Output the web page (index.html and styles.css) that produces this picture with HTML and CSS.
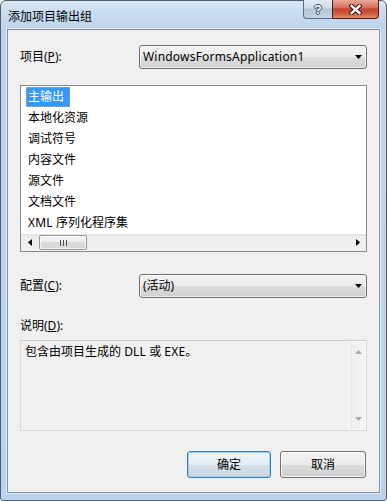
FILE: index.html
```html
<!DOCTYPE html>
<html lang="zh-CN">
<head>
<meta charset="utf-8">
<title>添加项目输出组</title>
<link rel="stylesheet" href="styles.css">
</head>
<body>
<div class="window">
  <div class="titlebar">
    <span class="title">添加项目输出组</span>
    <div class="caption">
      <div class="cap-btn help"><span class="help-glyph">?</span></div>
      <div class="cap-btn close">
        <svg width="13" height="11" viewBox="0 0 13 11"><path d="M2.5 2 L10.5 9 M10.5 2 L2.5 9" stroke="#3a1712" stroke-width="4.6" stroke-linecap="square" fill="none"/><path d="M2.5 2 L10.5 9 M10.5 2 L2.5 9" stroke="#ffffff" stroke-width="2.4" stroke-linecap="square" fill="none"/></svg>
      </div>
    </div>
  </div>
  <div class="client">
    <div class="field">
      <span class="label">项目(<u>P</u>):</span>
      <div class="combo"><span class="latin">WindowsFormsApplication1</span><svg class="drop" width="7" height="4" viewBox="0 0 7 4"><path d="M0 0 H7 L3.5 4 Z" fill="#000"/></svg></div>
    </div>
    <div class="listbox">
      <ul class="items">
        <li class="sel"><span>主输出</span></li>
        <li>本地化资源</li>
        <li>调试符号</li>
        <li>内容文件</li>
        <li>源文件</li>
        <li>文档文件</li>
        <li><span class="latin">XML</span> 序列化程序集</li>
      </ul>
      <div class="hscroll">
        <div class="sbtn"><svg width="4" height="7" viewBox="0 0 4 7"><path d="M4 0 V7 L0 3.5 Z" fill="#000"/></svg></div>
        <div class="thumb"><svg width="7" height="6" viewBox="0 0 7 6"><path d="M0.5 0 V6 M3.5 0 V6 M6.5 0 V6" stroke="#4a4a4a" stroke-width="1"/></svg></div>
        <div class="track"></div>
        <div class="sbtn"><svg width="4" height="7" viewBox="0 0 4 7"><path d="M0 0 V7 L4 3.5 Z" fill="#000"/></svg></div>
      </div>
    </div>
    <div class="field config">
      <span class="label">配置(<u>C</u>):</span>
      <div class="combo"><span>(活动)</span><svg class="drop" width="7" height="4" viewBox="0 0 7 4"><path d="M0 0 H7 L3.5 4 Z" fill="#000"/></svg></div>
    </div>
    <div class="desc-label">说明(<u>D</u>):</div>
    <div class="desc">
      <div class="desc-text">包含由项目生成的 <span class="latin">DLL</span> 或 <span class="latin">EXE</span>。</div>
      <div class="vscroll">
        <svg width="7" height="4" viewBox="0 0 7 4"><path d="M0 4 H7 L3.5 0 Z" fill="#a8a8a8"/></svg>
        <svg width="7" height="4" viewBox="0 0 7 4"><path d="M0 0 H7 L3.5 4 Z" fill="#a8a8a8"/></svg>
      </div>
    </div>
    <div class="buttons">
      <div class="btn default">确定</div>
      <div class="btn cancel">取消</div>
    </div>
  </div>
</div>
</body>
</html>
```
FILE: styles.css
```css
* { box-sizing: border-box; }
html, body { margin: 0; padding: 0; }
body {
  width: 387px;
  height: 501px;
  overflow: hidden;
  font-family: "Noto Sans", "Noto Sans CJK SC", sans-serif;
  font-size: 12px;
  color: #000;
  background: #fff;
}
u { text-decoration: underline; text-underline-offset: 1px; }
.latin { letter-spacing: 0.2px; }

.window {
  width: 387px;
  height: 501px;
  border: 1px solid #4f5d6e;
  border-radius: 6px 6px 3px 3px;
  background: linear-gradient(#dae7f5 0, #c6daf0 14px, #bdd4ed 30px, #b9d3ef 100%);
  display: flex;
  flex-direction: column;
  padding: 0 6px 7px 6px;
}

.titlebar {
  height: 28px;
  display: flex;
  justify-content: space-between;
  align-items: flex-start;
}
.title {
  margin-top: 7px;
  margin-left: 1px;
  line-height: 16px;
  font-size: 12px;
  font-family: "Noto Sans CJK SC", sans-serif;
  color: #000;
}
.caption {
  display: flex;
  margin-top: -1px;
  margin-right: 1px;
}
.cap-btn {
  height: 19px;
  display: flex;
  align-items: center;
  justify-content: center;
}
.help {
  width: 29px;
  border: 1px solid #5d6f86;
  border-top: none;
  border-right: none;
  border-radius: 0 0 0 4px;
  background: linear-gradient(#e4ecf4 0, #cdd9e6 45%, #b3c4d6 50%, #c4d3e2 100%);
}
.help-glyph {
  font-family: "Liberation Sans", sans-serif;
  font-weight: bold;
  font-size: 13px;
  line-height: 13px;
  color: #fff;
  text-shadow: 1px 0 0 #34465c, -1px 0 0 #34465c, 0 1px 0 #34465c, 0 -1px 0 #34465c;
}
.close {
  width: 47px;
  border: 1px solid #4c1d16;
  border-top: none;
  border-radius: 0 0 4px 0;
  background: linear-gradient(#eaa99a 0, #d87562 40%, #c4452f 50%, #cf5a40 75%, #e38e6c 100%);
}
.close svg { display: block; }

.client {
  flex: 1;
  border: 1px solid #86939f;
  box-shadow: 0 0 0 1px rgba(255,255,255,0.55);
  background: #f0f0f0;
  padding: 15px 12px 0 12px;
  display: flex;
  flex-direction: column;
}

.field {
  display: grid;
  grid-template-columns: 119px 1fr;
  align-items: center;
  height: 24px;
}
.label { line-height: 16px; }
.combo {
  height: 24px;
  border: 1px solid #707070;
  border-radius: 3px;
  background: linear-gradient(#f3f3f3 0, #ebebeb 50%, #dddddd 50%, #d0d0d0 100%);
  box-shadow: inset 0 0 0 1px rgba(255,255,255,0.6);
  padding: 0 4px 0 3px;
  display: flex;
  align-items: center;
  justify-content: space-between;
  line-height: 16px;
}
.drop { display: block; }

.listbox {
  margin-top: 16px;
  height: 167px;
  border: 1px solid #828790;
  background: #fff;
  display: flex;
  flex-direction: column;
}
.items {
  list-style: none;
  margin: 0;
  padding: 0 0 0 7px;
  flex: 1;
}
.items li {
  height: 21px;
  line-height: 21px;
  white-space: nowrap;
}
.items li.sel span {
  display: inline-block;
  height: 20px;
  line-height: 18px;
  margin-left: -2px;
  padding: 0 5px 0 1px;
  background: #3399ff;
  color: #fff;
  border: 1px dotted #e8a050;
}

.hscroll {
  height: 17px;
  display: flex;
  align-items: center;
  background: linear-gradient(#e2e2e2 0, #e2e2e2 1px, #ececec 2px, #f1f1f1 100%);
}
.sbtn {
  width: 17px;
  height: 17px;
  display: flex;
  align-items: center;
  justify-content: center;
}
.thumb {
  width: 48px;
  height: 15px;
  margin-left: 1px;
  border: 1px solid #979797;
  border-radius: 2px;
  background: linear-gradient(#f4f4f4 0, #ececec 50%, #dcdcdc 50%, #d6d6d6 100%);
  box-shadow: inset 0 0 0 1px rgba(255,255,255,0.7);
  display: flex;
  align-items: center;
  justify-content: center;
}
.thumb svg { display: block; }
.track { flex: 1; }

.config { margin-top: 22px; }

.desc-label {
  margin-top: 20px;
  line-height: 16px;
}
.desc {
  margin-top: 6px;
  height: 91px;
  border: 1px solid #d5d9dd;
  border-top-color: #c9ced3;
  background: #f0f0f0;
  display: flex;
}
.desc-text {
  flex: 1;
  padding: 3px 4px;
  line-height: 16px;
}
.vscroll {
  width: 17px;
  border: 1px solid #fbfbfb;
  background: linear-gradient(to right, #e6e6e6 0, #e6e6e6 1px, #efefef 2px, #f3f3f3 100%);
  display: flex;
  flex-direction: column;
  align-items: center;
  justify-content: space-between;
  padding: 8px 0 8px 1px;
}
.vscroll svg { display: block; }

.buttons {
  margin-top: 20px;
  display: flex;
  justify-content: flex-end;
  gap: 9px;
  padding-right: 1px;
}
.btn {
  width: 86px;
  height: 27px;
  border: 1px solid #707070;
  border-radius: 3px;
  background: linear-gradient(#f2f2f2 0, #ebebeb 50%, #dddddd 50%, #cfcfcf 100%);
  box-shadow: inset 0 0 0 1px rgba(255,255,255,0.75);
  display: flex;
  align-items: center;
  justify-content: center;
  line-height: 16px;
}
.btn.default {
  width: 84px;
  border-color: #3c7fb1;
  background: linear-gradient(#eef5fa 0, #e3eef5 50%, #d3e0e8 50%, #c9d7e0 100%);
  box-shadow: inset 0 0 0 1px #98d2ef;
}
```
